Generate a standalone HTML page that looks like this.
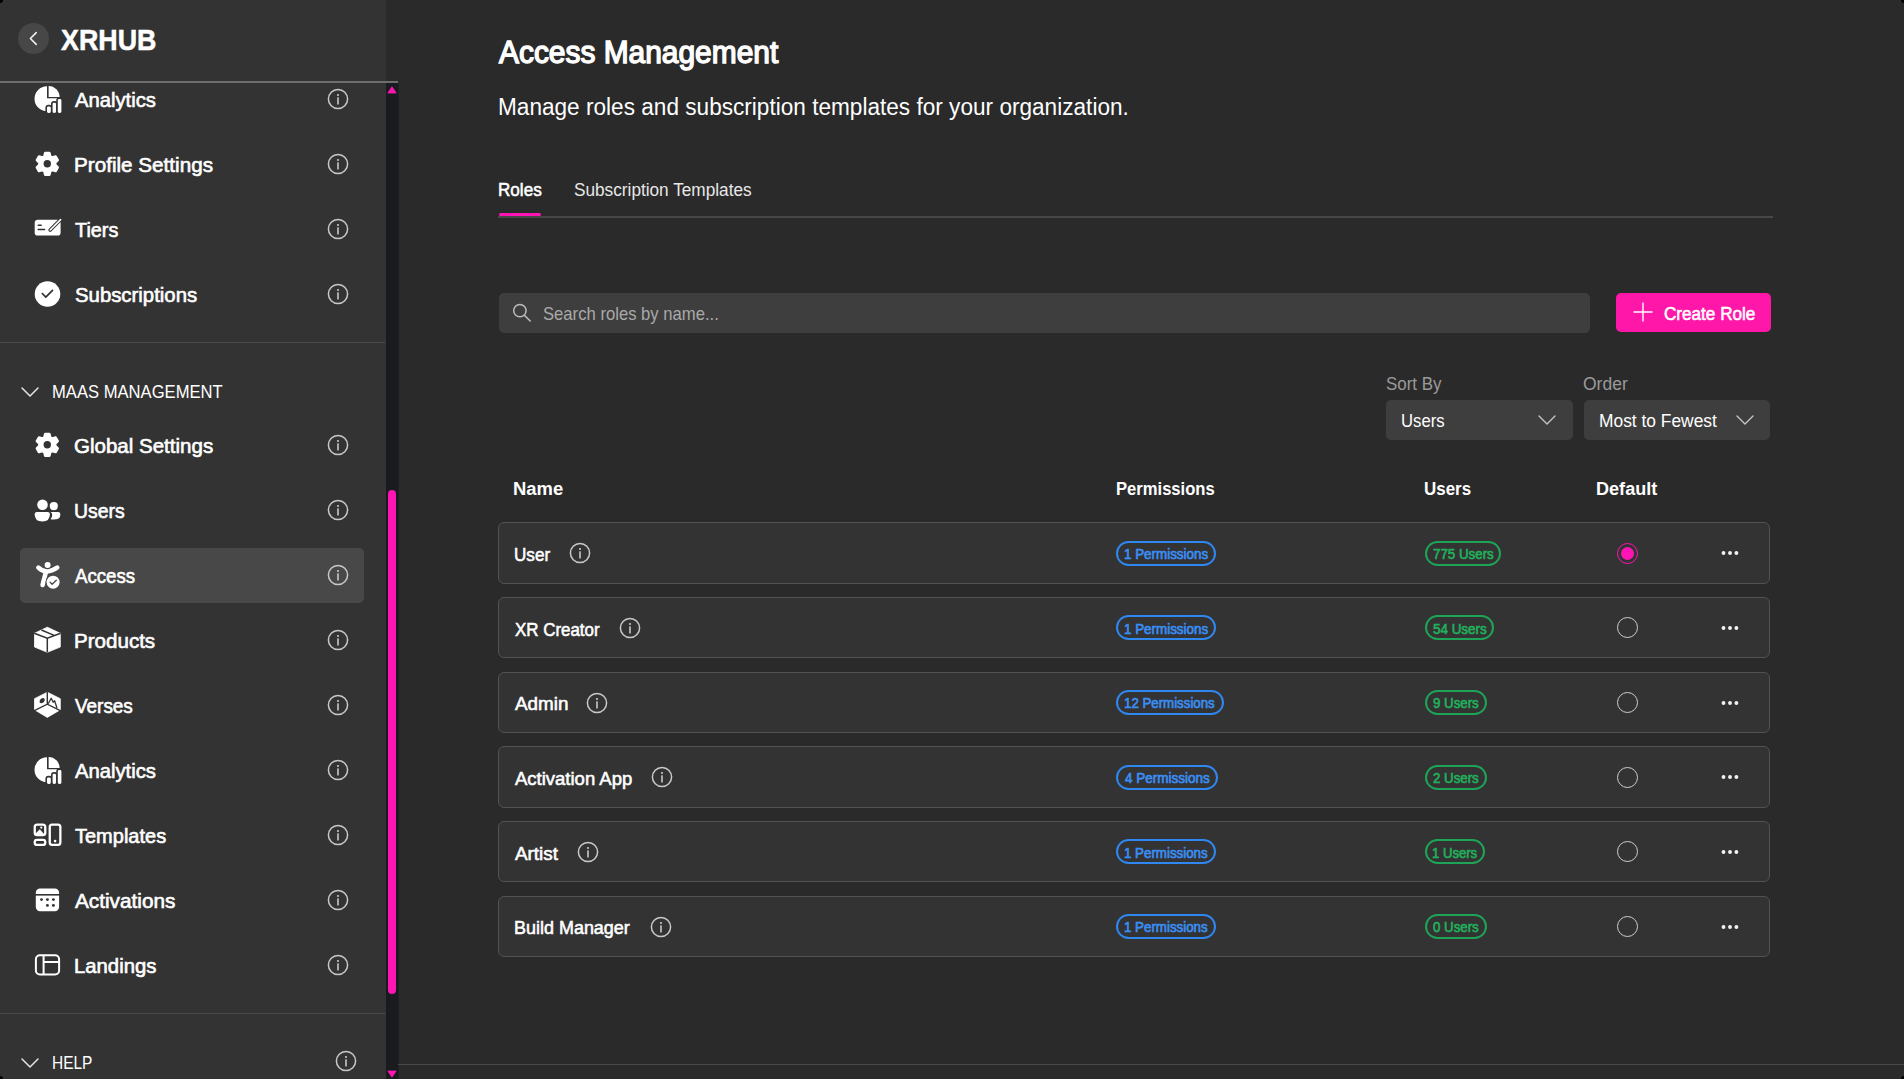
<!DOCTYPE html><html><head><meta charset="utf-8"><style>
*{margin:0;padding:0;box-sizing:border-box}
html,body{width:1904px;height:1079px;overflow:hidden;background:#2a2a2a;font-family:"Liberation Sans",sans-serif}
.a{position:absolute;display:block}
.t{position:absolute;white-space:nowrap}
.sb{position:absolute;left:0;top:0;width:385.5px;height:1079px;background:#333333}
.row{position:absolute;left:498px;width:1272px;height:61.5px;border:1.2px solid #525252;border-radius:6px;background:#333333}
.badge{position:absolute;height:25px;border:2px solid;border-radius:13px}
.radio{position:absolute;width:21px;height:21px;border-radius:50%;border:1.6px solid #cfcfcf}
.dot{position:absolute;width:3.8px;height:3.8px;border-radius:50%;background:#f2f2f2}
</style></head><body>
<div class="sb"></div>
<div class="a" style="left:17.5px;top:23px;width:31px;height:31px;border-radius:50%;background:#474747"></div>
<svg class="a" style="left:17.5px;top:23px" width="31" height="31" viewBox="0 0 31 31"><path d="M18.2,9.6 L12.4,15.5 L18.2,21.4" fill="none" stroke="#f0f0f0" stroke-width="1.6" stroke-linecap="round" stroke-linejoin="round"/></svg>
<div id="t1" class="t" style="left:61.20px;top:26px;font-size:29px;line-height:29px;color:#ffffff;font-weight:700;-webkit-text-stroke:0.5px #fff;transform:scaleX(0.9249);transform-origin:0 0;">XRHUB</div>
<div class="a" style="left:0;top:81px;width:398px;height:2px;background:#6e6e6e"></div>
<div class="a" style="left:19.5px;top:548px;width:344.5px;height:55px;border-radius:5px;background:#484848"></div>
<svg class="a" style="left:33px;top:85px" width="30" height="28" viewBox="0 0 30 28"><path d="M13.4,1.3 A12.5,12.5 0 1 0 25.9,13.2 L13.4,13.2 Z" fill="#ffffff" transform="translate(0.6,0)"/><path d="M15.6,0.9 A11.2,11.2 0 0 1 26.6,12 L15.6,12 Z" fill="#ffffff"/><g stroke="#333333" stroke-width="1.6" fill="#ffffff"><rect x="13.2" y="20.6" width="5.4" height="8.2" rx="2.2"/><rect x="18.8" y="16.9" width="5.0" height="11.9" rx="2.2"/><rect x="24.0" y="13.2" width="5.2" height="15.6" rx="2.2"/></g></svg>
<div id="t2" class="t" style="left:75.00px;top:90px;font-size:20.3px;line-height:20.3px;color:#ffffff;font-weight:400;-webkit-text-stroke:0.61px #ffffff;transform:scaleX(0.9961);transform-origin:0 0;">Analytics</div>
<svg class="a" style="left:324px;top:85.4px" width="28" height="28" viewBox="0 0 28 28"><circle cx="14" cy="14" r="9.6" fill="none" stroke="#c9c9c9" stroke-width="1.5"/><circle cx="14" cy="10" r="1.05" fill="#c9c9c9"/><rect x="13.2" y="12.2" width="1.6" height="7.2" rx="0.5" fill="#c9c9c9"/></svg>
<svg class="a" style="left:33px;top:150px" width="30" height="28" viewBox="0 0 30 28"><path d="M17.24,6.36 L16.36,2.99 L12.24,2.99 L11.36,6.36 L9.33,7.53 L5.97,6.61 L3.91,10.18 L6.39,12.63 L6.39,14.97 L3.91,17.42 L5.97,20.99 L9.33,20.07 L11.36,21.24 L12.24,24.61 L16.36,24.61 L17.24,21.24 L19.27,20.07 L22.63,20.99 L24.69,17.42 L22.21,14.97 L22.21,12.63 L24.69,10.18 L22.63,6.61 L19.27,7.53Z" fill="#ffffff" stroke="#ffffff" stroke-width="2.6" stroke-linejoin="round"/><circle cx="14.3" cy="13.8" r="3.7" fill="#333333"/></svg>
<div id="t3" class="t" style="left:73.98px;top:155px;font-size:20.3px;line-height:20.3px;color:#ffffff;font-weight:400;-webkit-text-stroke:0.61px #ffffff;transform:scaleX(1.0188);transform-origin:0 0;">Profile Settings</div>
<svg class="a" style="left:324px;top:150.4px" width="28" height="28" viewBox="0 0 28 28"><circle cx="14" cy="14" r="9.6" fill="none" stroke="#c9c9c9" stroke-width="1.5"/><circle cx="14" cy="10" r="1.05" fill="#c9c9c9"/><rect x="13.2" y="12.2" width="1.6" height="7.2" rx="0.5" fill="#c9c9c9"/></svg>
<svg class="a" style="left:33px;top:215px" width="30" height="28" viewBox="0 0 30 28"><rect x="1.7" y="4.8" width="25.9" height="15.8" rx="3.2" fill="#ffffff"/><path d="M17.2,15 L27.6,4.6" stroke="#333333" stroke-width="3.6" stroke-linecap="round"/><path d="M17.2,15 L27.6,4.6" stroke="#ffffff" stroke-width="1.6" stroke-linecap="round"/><path d="M5.2,10.2 H8.2 M5.2,14.5 H11.6" stroke="#333333" stroke-width="1.5" stroke-linecap="round"/></svg>
<div id="t4" class="t" style="left:75.00px;top:220px;font-size:20.3px;line-height:20.3px;color:#ffffff;font-weight:400;-webkit-text-stroke:0.61px #ffffff;transform:scaleX(0.9779);transform-origin:0 0;">Tiers</div>
<svg class="a" style="left:324px;top:215.4px" width="28" height="28" viewBox="0 0 28 28"><circle cx="14" cy="14" r="9.6" fill="none" stroke="#c9c9c9" stroke-width="1.5"/><circle cx="14" cy="10" r="1.05" fill="#c9c9c9"/><rect x="13.2" y="12.2" width="1.6" height="7.2" rx="0.5" fill="#c9c9c9"/></svg>
<svg class="a" style="left:33px;top:280px" width="30" height="28" viewBox="0 0 30 28"><circle cx="14.5" cy="14" r="12.8" fill="#ffffff"/><path d="M9.3,13.5 L12.8,17.2 L19.5,10.4" fill="none" stroke="#333333" stroke-width="1.7" stroke-linecap="round" stroke-linejoin="round"/></svg>
<div id="t5" class="t" style="left:75.00px;top:285px;font-size:20.3px;line-height:20.3px;color:#ffffff;font-weight:400;-webkit-text-stroke:0.61px #ffffff;transform:scaleX(1.0032);transform-origin:0 0;">Subscriptions</div>
<svg class="a" style="left:324px;top:280.4px" width="28" height="28" viewBox="0 0 28 28"><circle cx="14" cy="14" r="9.6" fill="none" stroke="#c9c9c9" stroke-width="1.5"/><circle cx="14" cy="10" r="1.05" fill="#c9c9c9"/><rect x="13.2" y="12.2" width="1.6" height="7.2" rx="0.5" fill="#c9c9c9"/></svg>
<svg class="a" style="left:33px;top:431px" width="30" height="28" viewBox="0 0 30 28"><path d="M17.24,6.36 L16.36,2.99 L12.24,2.99 L11.36,6.36 L9.33,7.53 L5.97,6.61 L3.91,10.18 L6.39,12.63 L6.39,14.97 L3.91,17.42 L5.97,20.99 L9.33,20.07 L11.36,21.24 L12.24,24.61 L16.36,24.61 L17.24,21.24 L19.27,20.07 L22.63,20.99 L24.69,17.42 L22.21,14.97 L22.21,12.63 L24.69,10.18 L22.63,6.61 L19.27,7.53Z" fill="#ffffff" stroke="#ffffff" stroke-width="2.6" stroke-linejoin="round"/><circle cx="14.3" cy="13.8" r="3.7" fill="#333333"/></svg>
<div id="t6" class="t" style="left:73.99px;top:436px;font-size:20.3px;line-height:20.3px;color:#ffffff;font-weight:400;-webkit-text-stroke:0.61px #ffffff;transform:scaleX(1.0117);transform-origin:0 0;">Global Settings</div>
<svg class="a" style="left:324px;top:431.4px" width="28" height="28" viewBox="0 0 28 28"><circle cx="14" cy="14" r="9.6" fill="none" stroke="#c9c9c9" stroke-width="1.5"/><circle cx="14" cy="10" r="1.05" fill="#c9c9c9"/><rect x="13.2" y="12.2" width="1.6" height="7.2" rx="0.5" fill="#c9c9c9"/></svg>
<svg class="a" style="left:33px;top:496px" width="30" height="28" viewBox="0 0 30 28"><circle cx="9.5" cy="8.8" r="5.3" fill="#ffffff"/><circle cx="20.8" cy="10.1" r="4.1" fill="#ffffff"/><path d="M17.6,16 H25 Q27.4,16 27.4,18.4 Q27.4,23.6 20.6,23.6 Q18.4,23.6 17.6,23.2 Q19.2,21.4 19.2,18.8 Q19.2,17.2 17.6,16Z" fill="#ffffff"/><path d="M4,16 H14.6 Q16.9,16 16.9,18.3 Q16.9,25.6 9.3,25.6 Q1.7,25.6 1.7,18.3 Q1.7,16 4,16Z" fill="#ffffff"/></svg>
<div id="t7" class="t" style="left:74.04px;top:501px;font-size:20.3px;line-height:20.3px;color:#ffffff;font-weight:400;-webkit-text-stroke:0.61px #ffffff;transform:scaleX(0.9572);transform-origin:0 0;">Users</div>
<svg class="a" style="left:324px;top:496.4px" width="28" height="28" viewBox="0 0 28 28"><circle cx="14" cy="14" r="9.6" fill="none" stroke="#c9c9c9" stroke-width="1.5"/><circle cx="14" cy="10" r="1.05" fill="#c9c9c9"/><rect x="13.2" y="12.2" width="1.6" height="7.2" rx="0.5" fill="#c9c9c9"/></svg>
<svg class="a" style="left:33px;top:561px" width="30" height="28" viewBox="0 0 30 28"><path d="M5.4,6.6 Q9.6,10.6 14.0,10.4 Q18.6,10.2 24.2,6.6" fill="none" stroke="#ffffff" stroke-width="4.6" stroke-linecap="round"/><path d="M13.2,10.0 Q11.2,17.5 9.6,24.0" fill="none" stroke="#ffffff" stroke-width="4.6" stroke-linecap="round"/><circle cx="14.6" cy="4.1" r="4.2" fill="#484848"/><circle cx="14.6" cy="4.1" r="3.0" fill="#ffffff"/><circle cx="20.1" cy="21.2" r="7.6" fill="#484848"/><circle cx="20.1" cy="21.2" r="6.5" fill="#ffffff"/><path d="M17.1,21.3 L19.2,23.3 L23.3,19.2" fill="none" stroke="#484848" stroke-width="1.3" stroke-linecap="round" stroke-linejoin="round"/></svg>
<div id="t8" class="t" style="left:75.00px;top:566px;font-size:20.3px;line-height:20.3px;color:#ffffff;font-weight:400;-webkit-text-stroke:0.61px #ffffff;transform:scaleX(0.9198);transform-origin:0 0;">Access</div>
<svg class="a" style="left:324px;top:561.4px" width="28" height="28" viewBox="0 0 28 28"><circle cx="14" cy="14" r="9.6" fill="none" stroke="#c9c9c9" stroke-width="1.5"/><circle cx="14" cy="10" r="1.05" fill="#c9c9c9"/><rect x="13.2" y="12.2" width="1.6" height="7.2" rx="0.5" fill="#c9c9c9"/></svg>
<svg class="a" style="left:33px;top:626px" width="30" height="28" viewBox="0 0 30 28"><path d="M1.5,7.3 L14.3,12.0 L14.3,26.3 L1.5,21 Z" fill="#ffffff" stroke="#ffffff" stroke-width="0.8" stroke-linejoin="round"/><path d="M27.3,7.3 L14.3,12.0 L14.3,26.3 L27.3,21 Z" fill="#ffffff" stroke="#ffffff" stroke-width="0.8" stroke-linejoin="round"/><path d="M1.5,7.3 L14.3,1.2 L27.3,7.3 L14.3,12 Z" fill="#ffffff" stroke="#ffffff" stroke-width="0.8" stroke-linejoin="round"/><path d="M1.2,7.3 L14.3,12.1 L27.6,7.3 M14.3,12.1 V26.6 M8.4,4.0 L21.2,9.4" fill="none" stroke="#333333" stroke-width="1.5"/></svg>
<div id="t9" class="t" style="left:73.99px;top:631px;font-size:20.3px;line-height:20.3px;color:#ffffff;font-weight:400;-webkit-text-stroke:0.61px #ffffff;transform:scaleX(1.0140);transform-origin:0 0;">Products</div>
<svg class="a" style="left:324px;top:626.4px" width="28" height="28" viewBox="0 0 28 28"><circle cx="14" cy="14" r="9.6" fill="none" stroke="#c9c9c9" stroke-width="1.5"/><circle cx="14" cy="10" r="1.05" fill="#c9c9c9"/><rect x="13.2" y="12.2" width="1.6" height="7.2" rx="0.5" fill="#c9c9c9"/></svg>
<svg class="a" style="left:33px;top:691px" width="30" height="28" viewBox="0 0 30 28"><path d="M1.5,7.7 L14.3,1.2 L27.3,7.7 L27.3,18.8 L14.3,26.4 L1.5,18.8 Z" fill="#ffffff" stroke="#ffffff" stroke-width="0.8" stroke-linejoin="round"/><path d="M14.3,0.5 V13.6 M0.8,19.8 L14.3,13.2 L27.8,19.8" fill="none" stroke="#333333" stroke-width="1.4"/><path d="M6.6,11.6 Q6.2,8.8 8.4,7.6 Q10.6,6.4 11.6,8.0 Q12.4,10.0 10.4,11.4 Q8.2,12.8 6.6,11.6Z" fill="#333333"/><path d="M15.2,12.8 L18.2,7.2 L20.2,11.2 L21.6,9.8 L24.0,17.0" fill="none" stroke="#333333" stroke-width="1.3" stroke-linejoin="round"/></svg>
<div id="t10" class="t" style="left:75.00px;top:696px;font-size:20.3px;line-height:20.3px;color:#ffffff;font-weight:400;-webkit-text-stroke:0.61px #ffffff;transform:scaleX(0.9327);transform-origin:0 0;">Verses</div>
<svg class="a" style="left:324px;top:691.4px" width="28" height="28" viewBox="0 0 28 28"><circle cx="14" cy="14" r="9.6" fill="none" stroke="#c9c9c9" stroke-width="1.5"/><circle cx="14" cy="10" r="1.05" fill="#c9c9c9"/><rect x="13.2" y="12.2" width="1.6" height="7.2" rx="0.5" fill="#c9c9c9"/></svg>
<svg class="a" style="left:33px;top:756px" width="30" height="28" viewBox="0 0 30 28"><path d="M13.4,1.3 A12.5,12.5 0 1 0 25.9,13.2 L13.4,13.2 Z" fill="#ffffff" transform="translate(0.6,0)"/><path d="M15.6,0.9 A11.2,11.2 0 0 1 26.6,12 L15.6,12 Z" fill="#ffffff"/><g stroke="#333333" stroke-width="1.6" fill="#ffffff"><rect x="13.2" y="20.6" width="5.4" height="8.2" rx="2.2"/><rect x="18.8" y="16.9" width="5.0" height="11.9" rx="2.2"/><rect x="24.0" y="13.2" width="5.2" height="15.6" rx="2.2"/></g></svg>
<div id="t11" class="t" style="left:75.00px;top:761px;font-size:20.3px;line-height:20.3px;color:#ffffff;font-weight:400;-webkit-text-stroke:0.61px #ffffff;transform:scaleX(0.9974);transform-origin:0 0;">Analytics</div>
<svg class="a" style="left:324px;top:756.4px" width="28" height="28" viewBox="0 0 28 28"><circle cx="14" cy="14" r="9.6" fill="none" stroke="#c9c9c9" stroke-width="1.5"/><circle cx="14" cy="10" r="1.05" fill="#c9c9c9"/><rect x="13.2" y="12.2" width="1.6" height="7.2" rx="0.5" fill="#c9c9c9"/></svg>
<svg class="a" style="left:33px;top:821px" width="30" height="28" viewBox="0 0 30 28"><g fill="none" stroke="#ffffff" stroke-width="2.3"><rect x="1.75" y="3.65" width="10.5" height="10.5" rx="2.4"/><rect x="1.75" y="18.85" width="10.5" height="5.1" rx="2.2"/><rect x="16.75" y="3.65" width="10.6" height="20.3" rx="2.4"/></g><path d="M2.8,12.2 L6.8,8.2 L11.2,13.2 L11.2,14 L2.8,14Z" fill="#ffffff"/><circle cx="8.3" cy="6.6" r="1.1" fill="#ffffff"/><circle cx="22.1" cy="20.1" r="1.3" fill="#ffffff"/></svg>
<div id="t12" class="t" style="left:75.00px;top:826px;font-size:20.3px;line-height:20.3px;color:#ffffff;font-weight:400;-webkit-text-stroke:0.61px #ffffff;transform:scaleX(0.9860);transform-origin:0 0;">Templates</div>
<svg class="a" style="left:324px;top:821.4px" width="28" height="28" viewBox="0 0 28 28"><circle cx="14" cy="14" r="9.6" fill="none" stroke="#c9c9c9" stroke-width="1.5"/><circle cx="14" cy="10" r="1.05" fill="#c9c9c9"/><rect x="13.2" y="12.2" width="1.6" height="7.2" rx="0.5" fill="#c9c9c9"/></svg>
<svg class="a" style="left:33px;top:886px" width="30" height="28" viewBox="0 0 30 28"><rect x="2.8" y="2.5" width="23.3" height="22.8" rx="4.2" fill="#ffffff"/><path d="M2,8.8 H27" stroke="#333333" stroke-width="1.6"/><circle cx="8.5" cy="13.6" r="1.45" fill="#333333"/><circle cx="14.4" cy="13.6" r="1.45" fill="#333333"/><circle cx="20.4" cy="13.6" r="1.45" fill="#333333"/><circle cx="14.4" cy="19.4" r="1.45" fill="#333333"/><circle cx="20.4" cy="19.4" r="1.45" fill="#333333"/></svg>
<div id="t13" class="t" style="left:75.00px;top:891px;font-size:20.3px;line-height:20.3px;color:#ffffff;font-weight:400;-webkit-text-stroke:0.61px #ffffff;transform:scaleX(1.0232);transform-origin:0 0;">Activations</div>
<svg class="a" style="left:324px;top:886.4px" width="28" height="28" viewBox="0 0 28 28"><circle cx="14" cy="14" r="9.6" fill="none" stroke="#c9c9c9" stroke-width="1.5"/><circle cx="14" cy="10" r="1.05" fill="#c9c9c9"/><rect x="13.2" y="12.2" width="1.6" height="7.2" rx="0.5" fill="#c9c9c9"/></svg>
<svg class="a" style="left:33px;top:951px" width="30" height="28" viewBox="0 0 30 28"><g fill="none" stroke="#ffffff" stroke-width="2"><rect x="2.9" y="4.3" width="23.2" height="19.2" rx="4"/><path d="M10.6,4.3 V23.5 M10.6,11 H26.6"/></g></svg>
<div id="t14" class="t" style="left:74.00px;top:956px;font-size:20.3px;line-height:20.3px;color:#ffffff;font-weight:400;-webkit-text-stroke:0.61px #ffffff;transform:scaleX(1.0002);transform-origin:0 0;">Landings</div>
<svg class="a" style="left:324px;top:951.4px" width="28" height="28" viewBox="0 0 28 28"><circle cx="14" cy="14" r="9.6" fill="none" stroke="#c9c9c9" stroke-width="1.5"/><circle cx="14" cy="10" r="1.05" fill="#c9c9c9"/><rect x="13.2" y="12.2" width="1.6" height="7.2" rx="0.5" fill="#c9c9c9"/></svg>
<div class="a" style="left:0;top:342px;width:385px;height:1px;background:#4a4a4a"></div>
<div class="a" style="left:0;top:1013px;width:385px;height:1px;background:#4a4a4a"></div>
<svg class="a" style="left:20px;top:385.5px" width="20" height="12" viewBox="0 0 20 12"><path d="M2,2 L10.0,10 L18,2" fill="none" stroke="#e6e6e6" stroke-width="1.5" stroke-linecap="round" stroke-linejoin="round"/></svg>
<div id="t15" class="t" style="left:52.02px;top:383px;font-size:18.9px;line-height:18.9px;color:#ffffff;font-weight:400;transform:scaleX(0.8790);transform-origin:0 0;">MAAS MANAGEMENT</div>
<svg class="a" style="left:20px;top:1056.5px" width="20" height="12" viewBox="0 0 20 12"><path d="M2,2 L10.0,10 L18,2" fill="none" stroke="#e6e6e6" stroke-width="1.5" stroke-linecap="round" stroke-linejoin="round"/></svg>
<div id="t16" class="t" style="left:52.08px;top:1054px;font-size:18.9px;line-height:18.9px;color:#ffffff;font-weight:400;transform:scaleX(0.8189);transform-origin:0 0;">HELP</div>
<svg class="a" style="left:331.8px;top:1047.3px" width="28" height="28" viewBox="0 0 28 28"><circle cx="14" cy="14" r="9.6" fill="none" stroke="#c9c9c9" stroke-width="1.5"/><circle cx="14" cy="10" r="1.05" fill="#c9c9c9"/><rect x="13.2" y="12.2" width="1.6" height="7.2" rx="0.5" fill="#c9c9c9"/></svg>
<div class="a" style="left:385.5px;top:83px;width:13px;height:996px;background:#1e1f23"></div><div class="a" style="left:386px;top:83px;width:11.5px;height:996px;background:#1a1b1f"></div>
<div class="a" style="left:388.2px;top:489.6px;width:7.8px;height:504.4px;border-radius:4px;background:#ff14b4"></div>
<svg class="a" style="left:386px;top:85px" width="12" height="10" viewBox="0 0 12 10"><path d="M6,1.8 L10.2,8 L1.8,8Z" fill="#ff14b4" stroke="#ff14b4" stroke-width="0.8" stroke-linejoin="round"/></svg>
<svg class="a" style="left:386px;top:1069px" width="12" height="10" viewBox="0 0 12 10"><path d="M1.8,2 L10.2,2 L6,8.2Z" fill="#ff14b4" stroke="#ff14b4" stroke-width="0.8" stroke-linejoin="round"/></svg>
<div id="t17" class="t" style="left:498.70px;top:37px;font-size:31px;line-height:31px;color:#ffffff;font-weight:400;-webkit-text-stroke:1.40px #ffffff;transform:scaleX(0.9646);transform-origin:0 0;">Access Management</div>
<div id="t18" class="t" style="left:497.72px;top:96px;font-size:23px;line-height:23px;color:#ffffff;font-weight:400;transform:scaleX(0.9829);transform-origin:0 0;">Manage roles and subscription templates for your organization.</div>
<div id="t19" class="t" style="left:497.80px;top:181px;font-size:18.9px;line-height:18.9px;color:#ffffff;font-weight:400;-webkit-text-stroke:0.57px #ffffff;transform:scaleX(0.9050);transform-origin:0 0;">Roles</div>
<div id="t20" class="t" style="left:574.00px;top:181px;font-size:18.9px;line-height:18.9px;color:#e8e8e8;font-weight:400;transform:scaleX(0.9109);transform-origin:0 0;">Subscription Templates</div>
<div class="a" style="left:498px;top:216px;width:1275px;height:2px;background:#474747"></div>
<div class="a" style="left:498.5px;top:212.7px;width:42px;height:3.2px;border-radius:2px;background:#ff14b4"></div>
<div class="a" style="left:498.5px;top:293px;width:1091.5px;height:40px;border-radius:5px;background:#3e3e3e"></div>
<svg class="a" style="left:510px;top:301px" width="24" height="24" viewBox="0 0 24 24"><circle cx="9.9" cy="9.6" r="6.2" fill="none" stroke="#bdbdbd" stroke-width="1.5"/><path d="M14.4,14.2 L20.2,20.0" stroke="#bdbdbd" stroke-width="1.6" stroke-linecap="round"/></svg>
<div id="t21" class="t" style="left:542.50px;top:304px;font-size:19px;line-height:19px;color:#a9a9a9;font-weight:400;transform:scaleX(0.8763);transform-origin:0 0;">Search roles by name...</div>
<div class="a" style="left:1615.5px;top:293px;width:155px;height:39px;border-radius:5px;background:#ff17a9"></div>
<svg class="a" style="left:1633px;top:302px" width="20" height="20" viewBox="0 0 20 20"><path d="M10,1 V19 M1,10 H19" stroke="#fff" stroke-width="1.4" stroke-linecap="round"/></svg>
<div id="t22" class="t" style="left:1664.00px;top:305px;font-size:18.9px;line-height:18.9px;color:#ffffff;font-weight:400;-webkit-text-stroke:0.57px #ffffff;transform:scaleX(0.9063);transform-origin:0 0;">Create Role</div>
<div id="t23" class="t" style="left:1385.80px;top:375px;font-size:18.9px;line-height:18.9px;color:#9a9a9a;font-weight:400;transform:scaleX(0.8961);transform-origin:0 0;">Sort By</div>
<div id="t24" class="t" style="left:1583.20px;top:375px;font-size:18.9px;line-height:18.9px;color:#9a9a9a;font-weight:400;transform:scaleX(0.9271);transform-origin:0 0;">Order</div>
<div class="a" style="left:1386px;top:400px;width:187px;height:40px;border-radius:5px;background:#3e3e3e"></div>
<div class="a" style="left:1584px;top:400px;width:186px;height:40px;border-radius:5px;background:#3e3e3e"></div>
<div id="t25" class="t" style="left:1401.12px;top:412px;font-size:18.9px;line-height:18.9px;color:#ffffff;font-weight:400;transform:scaleX(0.8834);transform-origin:0 0;">Users</div>
<div id="t26" class="t" style="left:1598.68px;top:412px;font-size:18.9px;line-height:18.9px;color:#ffffff;font-weight:400;transform:scaleX(0.9200);transform-origin:0 0;">Most to Fewest</div>
<svg class="a" style="left:1537px;top:414.2px" width="20" height="12" viewBox="0 0 20 12"><path d="M2,2 L10.0,10 L18,2" fill="none" stroke="#c4c4c4" stroke-width="1.4" stroke-linecap="round" stroke-linejoin="round"/></svg>
<svg class="a" style="left:1735px;top:414.2px" width="20" height="12" viewBox="0 0 20 12"><path d="M2,2 L10.0,10 L18,2" fill="none" stroke="#c4c4c4" stroke-width="1.4" stroke-linecap="round" stroke-linejoin="round"/></svg>
<div id="t27" class="t" style="left:513.02px;top:480px;font-size:18.9px;line-height:18.9px;color:#ffffff;font-weight:700;transform:scaleX(0.9751);transform-origin:0 0;">Name</div>
<div id="t28" class="t" style="left:1115.92px;top:480px;font-size:18.9px;line-height:18.9px;color:#ffffff;font-weight:700;transform:scaleX(0.8787);transform-origin:0 0;">Permissions</div>
<div id="t29" class="t" style="left:1424.40px;top:480px;font-size:18.9px;line-height:18.9px;color:#ffffff;font-weight:700;transform:scaleX(0.8960);transform-origin:0 0;">Users</div>
<div id="t30" class="t" style="left:1596.44px;top:480px;font-size:18.9px;line-height:18.9px;color:#ffffff;font-weight:700;transform:scaleX(0.9571);transform-origin:0 0;">Default</div>
<div class="row" style="top:522.20px"></div>
<div id="t31" class="t" style="left:513.60px;top:545px;font-size:19px;line-height:19px;color:#ffffff;font-weight:400;-webkit-text-stroke:0.57px #ffffff;transform:scaleX(0.8998);transform-origin:0 0;">User</div>
<svg class="a" style="left:565.8px;top:539.4000000000001px" width="28" height="28" viewBox="0 0 28 28"><circle cx="14" cy="14" r="9.6" fill="none" stroke="#c9c9c9" stroke-width="1.5"/><circle cx="14" cy="10" r="1.05" fill="#c9c9c9"/><rect x="13.2" y="12.2" width="1.6" height="7.2" rx="0.5" fill="#c9c9c9"/></svg>
<div class="badge" style="left:1116.3px;top:540.70px;width:99.5px;border-color:#2f87f2"></div>
<div id="t32" class="t" style="left:1123.58px;top:547px;font-size:14.5px;line-height:14.5px;color:#3a8ff5;font-weight:400;-webkit-text-stroke:0.65px #3a8ff5;transform:scaleX(0.9242);transform-origin:0 0;">1 Permissions</div>
<div class="badge" style="left:1424.6px;top:540.70px;width:76.8px;border-color:#1ea456"></div>
<div id="t33" class="t" style="left:1433.00px;top:547px;font-size:14.5px;line-height:14.5px;color:#22b05c;font-weight:400;-webkit-text-stroke:0.65px #22b05c;transform:scaleX(0.9190);transform-origin:0 0;">775 Users</div>
<div class="radio" style="left:1617.2px;top:542.70px;border-color:#ff14b4"></div>
<div class="a" style="left:1621px;top:546.60px;width:13.2px;height:13.2px;border-radius:50%;background:#ff14b4"></div>
<svg class="a" style="left:1718px;top:547.20px" width="24" height="12" viewBox="0 0 24 12"><circle cx="5.5" cy="6" r="1.95" fill="#f2f2f2"/><circle cx="12" cy="6" r="1.95" fill="#f2f2f2"/><circle cx="18.4" cy="6" r="1.95" fill="#f2f2f2"/></svg>
<div class="row" style="top:596.86px"></div>
<div id="t34" class="t" style="left:514.50px;top:620px;font-size:19px;line-height:19px;color:#ffffff;font-weight:400;-webkit-text-stroke:0.57px #ffffff;transform:scaleX(0.8903);transform-origin:0 0;">XR Creator</div>
<svg class="a" style="left:616.0px;top:614.0600000000001px" width="28" height="28" viewBox="0 0 28 28"><circle cx="14" cy="14" r="9.6" fill="none" stroke="#c9c9c9" stroke-width="1.5"/><circle cx="14" cy="10" r="1.05" fill="#c9c9c9"/><rect x="13.2" y="12.2" width="1.6" height="7.2" rx="0.5" fill="#c9c9c9"/></svg>
<div class="badge" style="left:1116.3px;top:615.36px;width:99.5px;border-color:#2f87f2"></div>
<div id="t35" class="t" style="left:1123.58px;top:622px;font-size:14.5px;line-height:14.5px;color:#3a8ff5;font-weight:400;-webkit-text-stroke:0.65px #3a8ff5;transform:scaleX(0.9242);transform-origin:0 0;">1 Permissions</div>
<div class="badge" style="left:1424.6px;top:615.36px;width:69.7px;border-color:#1ea456"></div>
<div id="t36" class="t" style="left:1433.00px;top:622px;font-size:14.5px;line-height:14.5px;color:#22b05c;font-weight:400;-webkit-text-stroke:0.65px #22b05c;transform:scaleX(0.9261);transform-origin:0 0;">54 Users</div>
<div class="radio" style="left:1617.2px;top:617.36px"></div>
<svg class="a" style="left:1718px;top:621.86px" width="24" height="12" viewBox="0 0 24 12"><circle cx="5.5" cy="6" r="1.95" fill="#f2f2f2"/><circle cx="12" cy="6" r="1.95" fill="#f2f2f2"/><circle cx="18.4" cy="6" r="1.95" fill="#f2f2f2"/></svg>
<div class="row" style="top:671.52px"></div>
<div id="t37" class="t" style="left:514.50px;top:694px;font-size:19px;line-height:19px;color:#ffffff;font-weight:400;-webkit-text-stroke:0.57px #ffffff;transform:scaleX(0.9908);transform-origin:0 0;">Admin</div>
<svg class="a" style="left:582.5px;top:688.72px" width="28" height="28" viewBox="0 0 28 28"><circle cx="14" cy="14" r="9.6" fill="none" stroke="#c9c9c9" stroke-width="1.5"/><circle cx="14" cy="10" r="1.05" fill="#c9c9c9"/><rect x="13.2" y="12.2" width="1.6" height="7.2" rx="0.5" fill="#c9c9c9"/></svg>
<div class="badge" style="left:1116.3px;top:690.02px;width:107.5px;border-color:#2f87f2"></div>
<div id="t38" class="t" style="left:1123.58px;top:696px;font-size:14.5px;line-height:14.5px;color:#3a8ff5;font-weight:400;-webkit-text-stroke:0.65px #3a8ff5;transform:scaleX(0.9155);transform-origin:0 0;">12 Permissions</div>
<div class="badge" style="left:1424.6px;top:690.02px;width:62px;border-color:#1ea456"></div>
<div id="t39" class="t" style="left:1433.00px;top:696px;font-size:14.5px;line-height:14.5px;color:#22b05c;font-weight:400;-webkit-text-stroke:0.65px #22b05c;transform:scaleX(0.9154);transform-origin:0 0;">9 Users</div>
<div class="radio" style="left:1617.2px;top:692.02px"></div>
<svg class="a" style="left:1718px;top:696.52px" width="24" height="12" viewBox="0 0 24 12"><circle cx="5.5" cy="6" r="1.95" fill="#f2f2f2"/><circle cx="12" cy="6" r="1.95" fill="#f2f2f2"/><circle cx="18.4" cy="6" r="1.95" fill="#f2f2f2"/></svg>
<div class="row" style="top:746.18px"></div>
<div id="t40" class="t" style="left:514.50px;top:769px;font-size:19px;line-height:19px;color:#ffffff;font-weight:400;-webkit-text-stroke:0.57px #ffffff;transform:scaleX(0.9736);transform-origin:0 0;">Activation App</div>
<svg class="a" style="left:648.0px;top:763.3800000000001px" width="28" height="28" viewBox="0 0 28 28"><circle cx="14" cy="14" r="9.6" fill="none" stroke="#c9c9c9" stroke-width="1.5"/><circle cx="14" cy="10" r="1.05" fill="#c9c9c9"/><rect x="13.2" y="12.2" width="1.6" height="7.2" rx="0.5" fill="#c9c9c9"/></svg>
<div class="badge" style="left:1116.3px;top:764.68px;width:102px;border-color:#2f87f2"></div>
<div id="t41" class="t" style="left:1124.50px;top:771px;font-size:14.5px;line-height:14.5px;color:#3a8ff5;font-weight:400;-webkit-text-stroke:0.65px #3a8ff5;transform:scaleX(0.9316);transform-origin:0 0;">4 Permissions</div>
<div class="badge" style="left:1424.6px;top:764.68px;width:62px;border-color:#1ea456"></div>
<div id="t42" class="t" style="left:1433.00px;top:771px;font-size:14.5px;line-height:14.5px;color:#22b05c;font-weight:400;-webkit-text-stroke:0.65px #22b05c;transform:scaleX(0.9154);transform-origin:0 0;">2 Users</div>
<div class="radio" style="left:1617.2px;top:766.68px"></div>
<svg class="a" style="left:1718px;top:771.18px" width="24" height="12" viewBox="0 0 24 12"><circle cx="5.5" cy="6" r="1.95" fill="#f2f2f2"/><circle cx="12" cy="6" r="1.95" fill="#f2f2f2"/><circle cx="18.4" cy="6" r="1.95" fill="#f2f2f2"/></svg>
<div class="row" style="top:820.84px"></div>
<div id="t43" class="t" style="left:514.50px;top:844px;font-size:19px;line-height:19px;color:#ffffff;font-weight:400;-webkit-text-stroke:0.57px #ffffff;transform:scaleX(0.9909);transform-origin:0 0;">Artist</div>
<svg class="a" style="left:574.0px;top:838.0400000000001px" width="28" height="28" viewBox="0 0 28 28"><circle cx="14" cy="14" r="9.6" fill="none" stroke="#c9c9c9" stroke-width="1.5"/><circle cx="14" cy="10" r="1.05" fill="#c9c9c9"/><rect x="13.2" y="12.2" width="1.6" height="7.2" rx="0.5" fill="#c9c9c9"/></svg>
<div class="badge" style="left:1116.3px;top:839.34px;width:99.5px;border-color:#2f87f2"></div>
<div id="t44" class="t" style="left:1123.58px;top:846px;font-size:14.5px;line-height:14.5px;color:#3a8ff5;font-weight:400;-webkit-text-stroke:0.65px #3a8ff5;transform:scaleX(0.9186);transform-origin:0 0;">1 Permissions</div>
<div class="badge" style="left:1424.6px;top:839.34px;width:60px;border-color:#1ea456"></div>
<div id="t45" class="t" style="left:1432.10px;top:846px;font-size:14.5px;line-height:14.5px;color:#22b05c;font-weight:400;-webkit-text-stroke:0.65px #22b05c;transform:scaleX(0.9034);transform-origin:0 0;">1 Users</div>
<div class="radio" style="left:1617.2px;top:841.34px"></div>
<svg class="a" style="left:1718px;top:845.84px" width="24" height="12" viewBox="0 0 24 12"><circle cx="5.5" cy="6" r="1.95" fill="#f2f2f2"/><circle cx="12" cy="6" r="1.95" fill="#f2f2f2"/><circle cx="18.4" cy="6" r="1.95" fill="#f2f2f2"/></svg>
<div class="row" style="top:895.50px"></div>
<div id="t46" class="t" style="left:513.55px;top:918px;font-size:19px;line-height:19px;color:#ffffff;font-weight:400;-webkit-text-stroke:0.57px #ffffff;transform:scaleX(0.9453);transform-origin:0 0;">Build Manager</div>
<svg class="a" style="left:647.0px;top:912.7px" width="28" height="28" viewBox="0 0 28 28"><circle cx="14" cy="14" r="9.6" fill="none" stroke="#c9c9c9" stroke-width="1.5"/><circle cx="14" cy="10" r="1.05" fill="#c9c9c9"/><rect x="13.2" y="12.2" width="1.6" height="7.2" rx="0.5" fill="#c9c9c9"/></svg>
<div class="badge" style="left:1116.3px;top:914.00px;width:99.5px;border-color:#2f87f2"></div>
<div id="t47" class="t" style="left:1123.58px;top:920px;font-size:14.5px;line-height:14.5px;color:#3a8ff5;font-weight:400;-webkit-text-stroke:0.65px #3a8ff5;transform:scaleX(0.9186);transform-origin:0 0;">1 Permissions</div>
<div class="badge" style="left:1424.6px;top:914.00px;width:62px;border-color:#1ea456"></div>
<div id="t48" class="t" style="left:1433.00px;top:920px;font-size:14.5px;line-height:14.5px;color:#22b05c;font-weight:400;-webkit-text-stroke:0.65px #22b05c;transform:scaleX(0.9154);transform-origin:0 0;">0 Users</div>
<div class="radio" style="left:1617.2px;top:916.00px"></div>
<svg class="a" style="left:1718px;top:920.50px" width="24" height="12" viewBox="0 0 24 12"><circle cx="5.5" cy="6" r="1.95" fill="#f2f2f2"/><circle cx="12" cy="6" r="1.95" fill="#f2f2f2"/><circle cx="18.4" cy="6" r="1.95" fill="#f2f2f2"/></svg>
<div class="a" style="left:398px;top:1064px;width:1506px;height:1px;background:#494949"></div>
<div class="a" style="left:0;top:0;width:3px;height:3px;background:#000;border-bottom-right-radius:3px"></div>
<div class="a" style="left:1901px;top:0;width:3px;height:3px;background:#000;border-bottom-left-radius:3px"></div>
<div class="a" style="left:0;top:1076px;width:3px;height:3px;background:#000;border-top-right-radius:3px"></div>
<div class="a" style="left:1901px;top:1076px;width:3px;height:3px;background:#000;border-top-left-radius:3px"></div>
</body></html>
